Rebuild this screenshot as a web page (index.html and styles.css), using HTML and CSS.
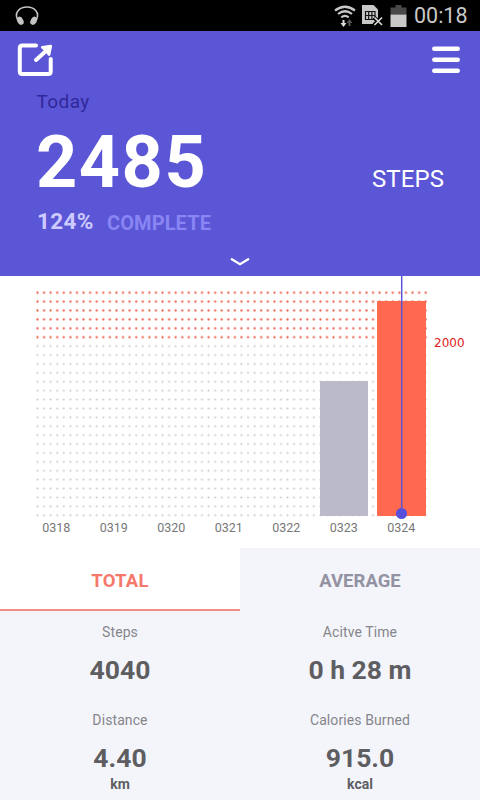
FILE: index.html
```html
<!DOCTYPE html>
<html lang="en">
<head>
  <meta charset="UTF-8">
  <meta name="viewport" content="width=device-width, initial-scale=1.0">
  <title>Steps</title>
  <link rel="stylesheet" href="styles.css">
</head>
<body>
  <div class="status-bar">
    <svg class="headphones" width="24" height="20" viewBox="0 0 24 20">
      <path d="M2.500 13.500C-1 6 5 1 12 1S25 6 21.500 13.500" fill="none" stroke="#c4c4c4" stroke-width="1.600"/>
      <ellipse cx="5.300" cy="14.800" rx="3" ry="4.300" transform="rotate(-28 5.300 14.800)" fill="#c4c4c4"/>
      <ellipse cx="18.700" cy="14.800" rx="3" ry="4.300" transform="rotate(28 18.700 14.800)" fill="#c4c4c4"/>
    </svg>
    <svg class="status-icons" width="75" height="24" viewBox="333 3 75 24">
      <g fill="none" stroke="#c8c8c8" stroke-width="2.200">
        <path d="M335 9.500Q345 2 355 9.500"/>
        <path d="M338 13Q345 7.500 352 13"/>
        <path d="M341.300 16.300Q345 13.500 348.700 16.300"/>
      </g>
      <path d="M342.500 19h2v3h2l-3 4-3-4h2z" fill="#dddddd"/>
      <path d="M348.500 25h2v-3h2l-3-4-3 4h2z" fill="#555555"/>
      <path d="M362 4h11.500l4.500 4.500v9.500l-4 5h-12z" fill="#c8c8c8"/>
      <path d="M365.500 10.500h9.500v8h-9.500zM365.500 14.500h9.500M368.700 10.500v8M371.900 10.500v8" fill="none" stroke="#111111" stroke-width="1.200"/>
      <path d="M374 16.500l8 7.500M382 16.500l-8 7.500" stroke="#000000" stroke-width="4"/>
      <path d="M374.500 16.500l7.500 7.500M382 16.500l-7.500 7.500" stroke="#d8d8d8" stroke-width="1.700"/>
      <path d="M395.500 4h6v2.500h5v7h-16v-7h5z" fill="#494949"/>
      <path d="M390.500 13.500h16v12.500h-16z" fill="#c8c8c8"/>
    </svg>
    <span class="clock">00:18</span>
  </div>

  <div class="header">
    <div class="toolbar">
      <svg width="37" height="34" viewBox="17 43 37 34" fill="none" stroke="#ffffff" stroke-width="4" stroke-linecap="round" stroke-linejoin="round">
        <path d="M36 45.500H22.500Q19.800 45.500 19.800 48V71.500Q19.800 74 22.500 74H48Q50.700 74 50.700 71.500V59"/>
        <path d="M36 60L46.500 50.500"/>
        <path d="M42.300 47.300L50.700 46.200L49 54.500L46.500 51z" fill="#ffffff" stroke-width="2.800"/>
      </svg>
      <svg width="28" height="28" viewBox="0 0 28 28" stroke="#ffffff" stroke-width="4.500" stroke-linecap="round">
        <path d="M2.300 2.800h23.400M2.300 13.700h23.400M2.300 24.700h23.400"/>
      </svg>
    </div>
    <div class="today">Today</div>
    <div class="count-row">
      <span class="count">2485</span>
      <span class="unit-label">STEPS</span>
    </div>
    <div class="progress-row">
      <span class="percent">124%</span>
      <span class="complete">COMPLETE</span>
    </div>
    <svg class="chevron" width="22" height="10" viewBox="0 0 22 10">
      <path d="M2 1.700L11 7.200L20 1.700" fill="none" stroke="#ffffff" stroke-width="2.200"/>
    </svg>
  </div>

  <div class="chart">
    <svg class="plot" width="480" height="244" viewBox="0 276 480 244">
      <!-- 60 x 26 dot grid, red above the goal -->
      <defs>
        <pattern id="redDots" x="34.200" y="288.300" width="6.580" height="8.900" patternUnits="userSpaceOnUse">
          <circle cx="3.290" cy="4.450" r="1.150" fill="#f0604f"/>
        </pattern>
        <pattern id="grayDots" x="34.200" y="288.300" width="6.580" height="8.900" patternUnits="userSpaceOnUse">
          <circle cx="3.290" cy="4.450" r="1.050" fill="#c9c9d0"/>
        </pattern>
      </defs>
      <rect x="34.200" y="288.300" width="394.800" height="53.400" fill="url(#redDots)"/>
      <rect x="34.200" y="341.700" width="394.800" height="178" fill="url(#grayDots)"/>
      <rect x="320" y="381" width="48" height="135" rx="1" fill="#bbbac9"/>
      <rect x="377" y="301" width="49" height="215" rx="1" fill="#ff6950"/>
      <path d="M401.700 276V513" stroke="#5b55d6" stroke-width="1.500"/>
      <circle cx="401.500" cy="513.500" r="5.500" fill="#5650dc"/>
    </svg>
    <span class="goal">2000</span>
    <div class="days">
      <span>0318</span>
      <span>0319</span>
      <span>0320</span>
      <span>0321</span>
      <span>0322</span>
      <span>0323</span>
      <span>0324</span>
    </div>
  </div>

  <div class="tabs">
    <div class="tab active">TOTAL</div>
    <div class="tab">AVERAGE</div>
  </div>

  <div class="stats">
    <div class="stat">
      <div class="label">Steps</div>
      <div class="value">4040</div>
    </div>
    <div class="stat">
      <div class="label">Acitve Time</div>
      <div class="value">0 h 28 m</div>
    </div>
    <div class="stat">
      <div class="label">Distance</div>
      <div class="value">4.40</div>
      <div class="unit">km</div>
    </div>
    <div class="stat">
      <div class="label">Calories Burned</div>
      <div class="value">915.0</div>
      <div class="unit">kcal</div>
    </div>
  </div>
</body>
</html>
```
FILE: styles.css
```css
* {
  box-sizing: border-box;
}

body {
  margin: 0;
  width: 480px;
  height: 800px;
  overflow: hidden;
  font-family: Roboto, sans-serif;
  background-color: #ffffff;
}

svg {
  display: block;
}

/* Status bar */
.status-bar {
  display: flex;
  align-items: center;
  height: 31px;
  padding: 0 12px 0 15px;
  background-color: #000000;
}

.status-icons {
  margin-left: auto;
}

.clock {
  width: 54px;
  margin-left: 6px;
  font-size: 21.5px;
  line-height: 31px;
  color: #c8c8c8;
}

/* Header */
.header {
  height: 245px;
  padding-top: 12px;
  background-color: #5b56d6;
  color: #ffffff;
}

.toolbar {
  display: flex;
  justify-content: space-between;
  align-items: center;
  height: 34px;
  padding: 0 20px 0 17px;
}

.today {
  margin: 13px 0 0 36.5px;
  font-size: 19px;
  line-height: 24px;
  letter-spacing: 0.4px;
  color: #30289a;
}

.count-row {
  display: flex;
  justify-content: space-between;
  height: 80px;
  margin-top: 9px;
  padding: 0 36px;
}

.count {
  font-size: 72px;
  font-weight: bold;
  line-height: 80px;
  letter-spacing: 1.5px;
}

.unit-label {
  padding-top: 39px;
  font-size: 24px;
  line-height: 34px;
  letter-spacing: 0.1px;
}

.progress-row {
  display: flex;
  height: 30px;
  margin-top: 4px;
  padding-left: 37px;
  line-height: 29px;
  font-weight: bold;
}

.percent {
  width: 70px;
  font-size: 22.5px;
  letter-spacing: 0.3px;
  color: #cccaff;
}

.complete {
  font-size: 20px;
  line-height: 32px;
  letter-spacing: 0.1px;
  color: #8985f3;
}

.chevron {
  margin: 20px auto 0;
}

/* Chart */
.chart {
  position: relative;
  height: 272px;
}

.goal {
  position: absolute;
  left: 434px;
  top: 59px;
  font-family: "DejaVu Sans", sans-serif;
  font-size: 12px;
  line-height: 16px;
  color: #e02020;
}

.days {
  display: grid;
  grid-template-columns: repeat(7, 57.5px);
  padding-left: 27.5px;
  font-size: 12.5px;
  line-height: 16px;
  text-align: center;
  color: #777777;
}

/* Tabs */
.tabs {
  display: flex;
  height: 63px;
  background-color: #f4f5fb;
}

.tab {
  width: 240px;
  font-size: 18.5px;
  font-weight: bold;
  line-height: 66px;
  text-align: center;
  color: #9392a3;
}

.tab.active {
  background-color: #ffffff;
  border-bottom: 2px solid #ef8d86;
  letter-spacing: 0.2px;
  color: #f6776c;
}

/* Stats */
.stats {
  display: grid;
  grid-template-columns: 240px 240px;
  grid-template-rows: 88px 101px;
  background-color: #f4f5fb;
}

.stat {
  padding-top: 11px;
  text-align: center;
}

.label {
  font-size: 14px;
  line-height: 20px;
  letter-spacing: 0.1px;
  color: #85858b;
}

.value {
  margin-top: 11px;
  font-size: 26.5px;
  font-weight: bold;
  line-height: 34px;
  color: #5e5e62;
}

.unit {
  font-size: 14px;
  font-weight: bold;
  line-height: 18px;
  color: #5e5e62;
}
```
